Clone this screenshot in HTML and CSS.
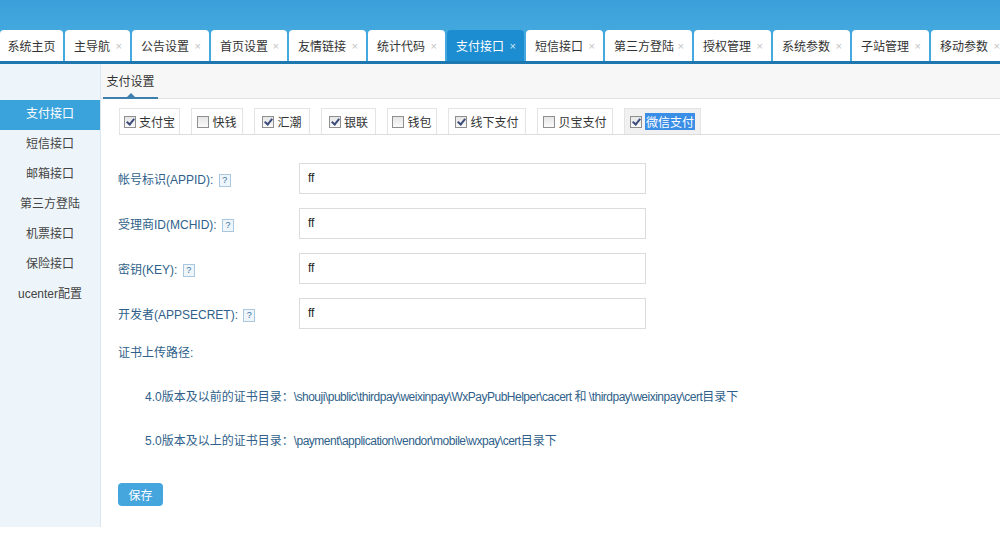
FILE: index.html
```html
<!DOCTYPE html>
<html lang="zh-CN">
<head>
    <meta charset="UTF-8">
    <title>支付接口</title>
    <link rel="stylesheet" href="styles.css">
</head>
<body>
    <!-- Top bar -->
    <div class="topbar"></div>

    <!-- Tab strip -->
    <div class="tabs">
        <div class="tab home">系统主页</div>
        <div class="tab w65">主导航<span class="x">×</span></div>
        <div class="tab">公告设置<span class="x">×</span></div>
        <div class="tab w76">首页设置<span class="x">×</span></div>
        <div class="tab">友情链接<span class="x">×</span></div>
        <div class="tab">统计代码<span class="x">×</span></div>
        <div class="tab active">支付接口<span class="x">×</span></div>
        <div class="tab">短信接口<span class="x">×</span></div>
        <div class="tab w87">第三方登陆<span class="x">×</span></div>
        <div class="tab">授权管理<span class="x">×</span></div>
        <div class="tab">系统参数<span class="x">×</span></div>
        <div class="tab">子站管理<span class="x">×</span></div>
        <div class="tab">移动参数<span class="x">×</span></div>
    </div>

    <div class="layout">
        <!-- Side menu -->
        <div class="sidebar">
            <div class="side-item active">支付接口</div>
            <div class="side-item">短信接口</div>
            <div class="side-item">邮箱接口</div>
            <div class="side-item">第三方登陆</div>
            <div class="side-item">机票接口</div>
            <div class="side-item">保险接口</div>
            <div class="side-item">ucenter配置</div>
        </div>

        <!-- Main panel -->
        <div class="main">
            <div class="subhead">
                <div class="subtab">支付设置</div>
            </div>

            <div class="content">
                <div class="pay-tabs">
                    <label class="pay-tab w61"><span class="cb on"></span>支付宝</label>
                    <label class="pay-tab w52"><span class="cb"></span>快钱</label>
                    <label class="pay-tab w56"><span class="cb on"></span>汇潮</label>
                    <label class="pay-tab w55"><span class="cb on"></span>银联</label>
                    <label class="pay-tab w50"><span class="cb"></span>钱包</label>
                    <label class="pay-tab w78"><span class="cb on"></span>线下支付</label>
                    <label class="pay-tab w76"><span class="cb"></span>贝宝支付</label>
                    <label class="pay-tab w77 current"><span class="cb on"></span><span class="sel">微信支付</span></label>
                </div>

                <div class="form">
                    <div class="row">
                        <div class="label">帐号标识(APPID): <span class="help">?</span></div>
                        <div class="input">ff</div>
                    </div>
                    <div class="row">
                        <div class="label">受理商ID(MCHID): <span class="help">?</span></div>
                        <div class="input">ff</div>
                    </div>
                    <div class="row">
                        <div class="label">密钥(KEY): <span class="help">?</span></div>
                        <div class="input">ff</div>
                    </div>
                    <div class="row">
                        <div class="label">开发者(APPSECRET): <span class="help">?</span></div>
                        <div class="input">ff</div>
                    </div>
                </div>

                <div class="cert-title">证书上传路径:</div>
                <div class="cert-line">4.0版本及以前的证书目录：<span class="path">\shouji\public\thirdpay\weixinpay\WxPayPubHelper\cacert 和 \thirdpay\weixinpay\cert</span>目录下</div>
                <div class="cert-line">5.0版本及以上的证书目录：<span class="path">\payment\application\vendor\mobile\wxpay\cert</span>目录下</div>

                <button class="save">保存</button>
            </div>
        </div>
    </div>
</body>
</html>
```

FILE: styles.css
```css
/* General */
body {
    margin: 0;
    width: 1000px;
    height: 550px;
    overflow: hidden;
    background: #fff;
    font-family: "Liberation Sans", "Noto Sans CJK SC", sans-serif;
    font-size: 12px;
    color: #333;
}

/* Top bar */
.topbar {
    height: 30px;
    background: linear-gradient(#3ba0d9, #43a8de);
}

/* Tab strip */
.tabs {
    display: flex;
    gap: 2px;
    height: 31px;
    background: #44a9df;
    border-bottom: 3px solid #1e78b0;
    overflow: hidden;
}

.tab {
    flex: none;
    box-sizing: border-box;
    width: 77px;
    display: flex;
    align-items: center;
    justify-content: space-between;
    height: 31px;
    padding: 0 8px 0 9px;
    background: #fff;
    border-radius: 4px 4px 0 0;
    font-size: 12px;
    color: #333;
    white-space: nowrap;
}

.tab.home {
    width: 63px;
    justify-content: center;
    padding: 0;
}

.w65 { width: 65px; }
.tab.w76 { width: 76px; }
.w87 { width: 87px; }

.tab .x {
    font-size: 11px;
    color: #c4c4c4;
}

.tab.active {
    background: #1b8dd0;
    color: #fff;
}

.tab.active .x {
    color: #cfe6f5;
}

/* Layout */
.layout {
    display: flex;
    height: 463px;
}

.sidebar {
    width: 100px;
    padding-top: 36px;
    background: #eef5fa;
    border-right: 1px solid #dbe7f0;
}

.side-item {
    height: 30px;
    line-height: 28px;
    text-align: center;
    color: #444;
    font-size: 12px;
}

.side-item.active {
    background: #3ba3dc;
    color: #fff;
}

.main {
    flex: 1;
}

/* Sub header */
.subhead {
    height: 34px;
    background: #f7f7f7;
    border-bottom: 1px solid #e2e2e2;
    padding-left: 2px;
}

.subtab {
    position: relative;
    width: 55px;
    height: 33px;
    line-height: 36px;
    text-align: center;
    color: #333;
    border-bottom: 2px solid #3f7fae;
}

.subtab::after {
    content: "";
    position: absolute;
    left: 24px;
    bottom: 0;
    border: 4px solid transparent;
    border-bottom-color: #3f7fae;
}

.content {
    padding: 9px 0 0 17px;
}

/* Payment checkbox tabs */
.pay-tabs {
    display: flex;
    gap: 11px;
    height: 26px;
    border-bottom: 1px solid #ddd;
    margin-left: 1px;
}

.pay-tab {
    box-sizing: border-box;
    display: flex;
    align-items: center;
    justify-content: center;
    height: 26px;
    border: 1px solid #e4e4e4;
    border-bottom: none;
    background: #fff;
    color: #333;
    font-size: 12px;
}

.pay-tab.current {
    background: #f1f1f1;
}

.w61 { width: 61px; }
.w52 { width: 52px; }
.w56 { width: 56px; }
.w55 { width: 55px; }
.w50 { width: 50px; }
.w78 { width: 78px; }
.pay-tab.w76 { width: 76px; }
.w77 { width: 77px; }

.cb {
    position: relative;
    width: 10px;
    height: 10px;
    margin-right: 3px;
    border: 1px solid #8f8f8f;
    background: linear-gradient(#e6e6e6, #fafafa);
}

.cb.on::after {
    content: "";
    position: absolute;
    left: 3px;
    top: 0;
    width: 3px;
    height: 6px;
    border: solid #3c4b7a;
    border-width: 0 2px 2px 0;
    transform: rotate(40deg);
}

.sel {
    background: #3a8ee6;
    color: #fff;
    padding: 0 1px;
}

/* Form */
.form {
    padding-top: 28px;
}

.row {
    display: flex;
    align-items: center;
    margin-bottom: 14px;
}

.label {
    width: 181px;
    color: #2f5f8a;
    font-size: 12px;
}

.help {
    display: inline-block;
    width: 10px;
    height: 11px;
    line-height: 11px;
    margin-left: 2px;
    border: 1px solid #a9c7de;
    background: #eef5fb;
    color: #3a6f9c;
    font-size: 9px;
    text-align: center;
    vertical-align: middle;
}

.input {
    width: 337px;
    height: 29px;
    line-height: 29px;
    padding-left: 8px;
    border: 1px solid #dcdcdc;
    color: #222;
    font-size: 12px;
}

.cert-title {
    color: #2f5f8a;
}

.cert-line {
    margin-top: 27px;
    padding-left: 27px;
    color: #2f5f8a;
}

.path {
    letter-spacing: -0.5px;
}

.save {
    margin-top: 35px;
    width: 45px;
    height: 23px;
    border: none;
    border-radius: 4px;
    background: #45a5dd;
    color: #fff;
    font-family: inherit;
    font-size: 12px;
    cursor: pointer;
}
```
